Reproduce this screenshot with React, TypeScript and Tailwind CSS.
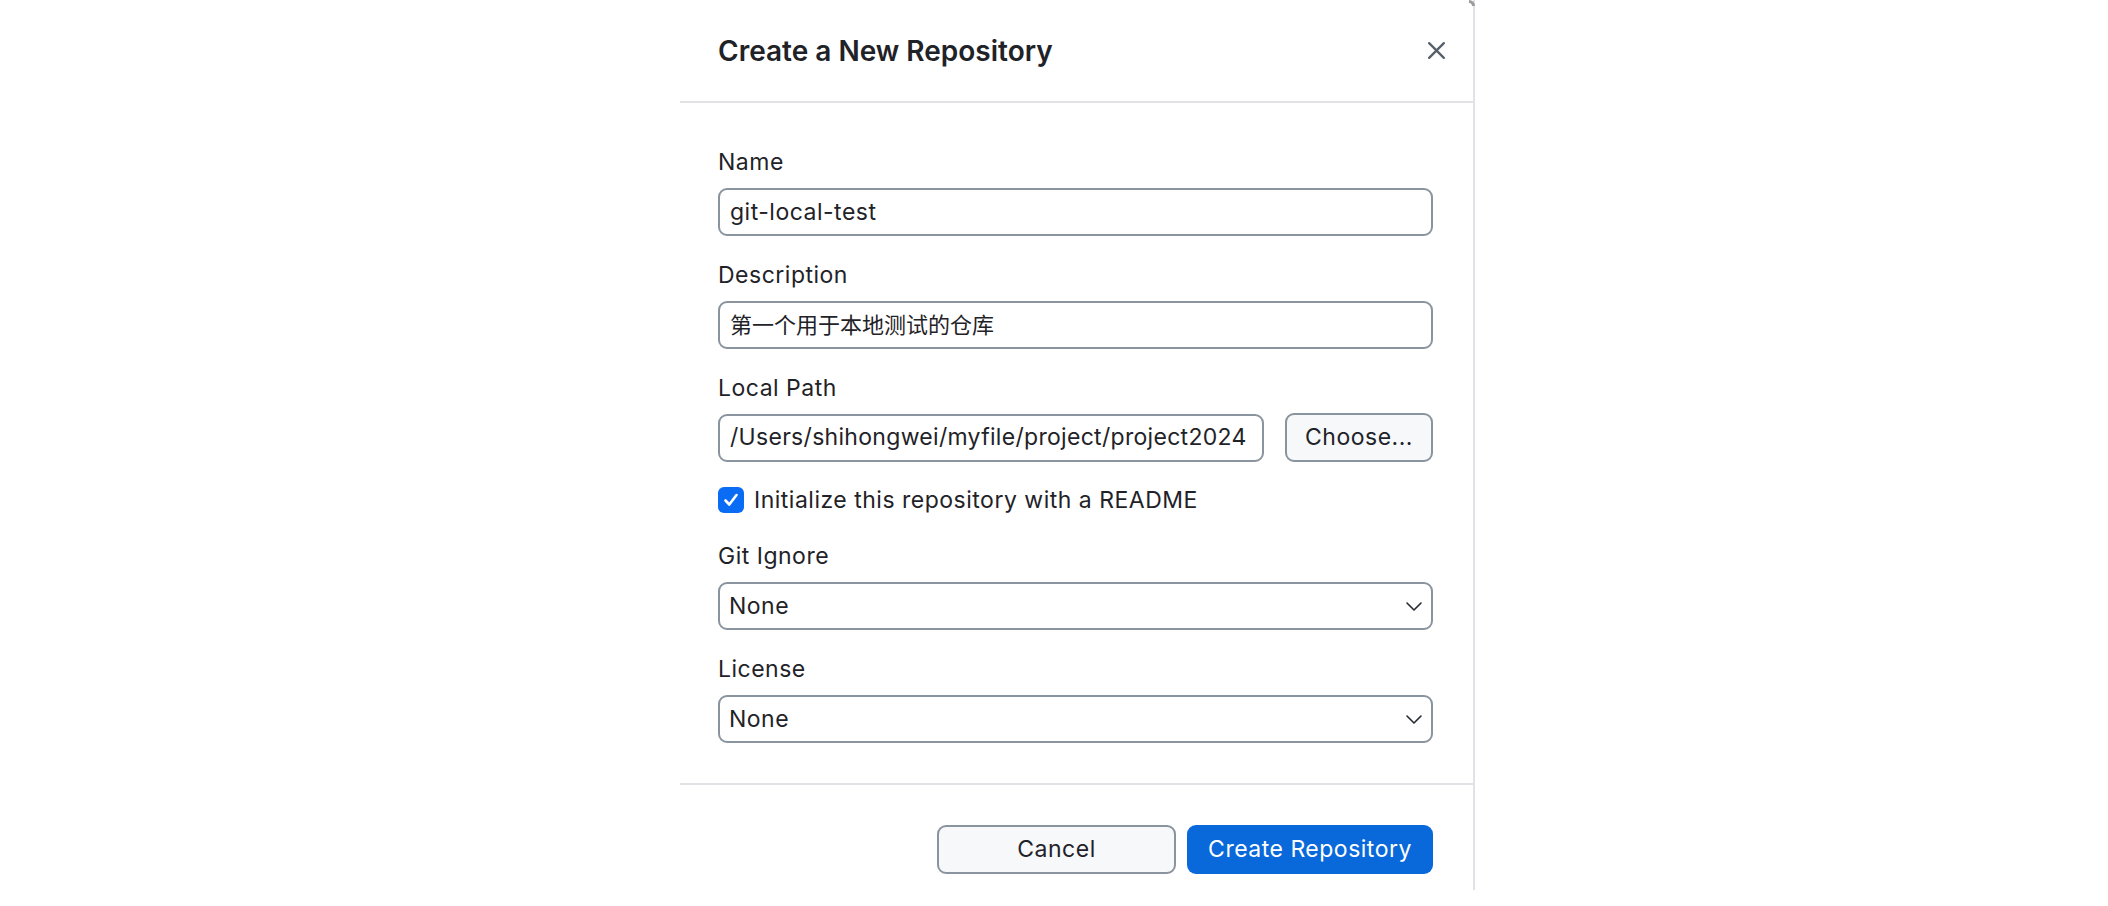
import React from "react";

const font = { fontFamily: "Inter, 'Noto Sans CJK SC', sans-serif" };

const Label: React.FC<{ children: React.ReactNode }> = ({ children }) => (
  <div className="h-[30px] text-[23px] leading-[30px] tracking-[0.5px] text-[#1f2328]">{children}</div>
);

const TextInput: React.FC<{ value: string; className?: string; textClass?: string }> = ({
  value,
  className = "",
  textClass = "text-[23px] tracking-[0.5px]",
}) => (
  <div
    className={`flex h-[48px] items-center overflow-hidden rounded-[9px] border-2 border-[#8a949e] bg-white px-[10px] text-[#1f2328] ${textClass} ${className}`}
  >
    <span className="whitespace-nowrap">{value}</span>
  </div>
);

const SelectBox: React.FC<{ value: string }> = ({ value }) => (
  <div className="flex h-[48px] items-center justify-between rounded-[9px] border-2 border-[#8a949e] bg-white pl-[9px] pr-[8px] text-[23px] tracking-[0.5px] text-[#1f2328]">
    <span>{value}</span>
    <svg width="18" height="18" viewBox="0 0 18 18" fill="none">
      <path d="M2 6l7 7 7-7" stroke="#24292f" strokeWidth="1.6" strokeLinecap="round" strokeLinejoin="round" />
    </svg>
  </div>
);

export default function App() {
  return (
    <div className="min-h-[906px] w-full bg-white" style={font}>
      <div className="relative ml-[680px] flex w-[795px] flex-col border-r-[2px] border-[#e1e1e6] bg-white">
        {/* window corner */}
        <div className="absolute right-[-2px] top-0 h-[6px] w-[6px] rounded-tr-[6px] border-r-[3px] border-t-[3px] border-[#9a9aa0]" />

        {/* header */}
        <div className="flex h-[101px] items-center justify-between pl-[38px] pr-[22px]">
          <h1 className="text-[28px] font-semibold text-[#1f2328]">Create a New Repository</h1>
          <button className="flex h-[30px] w-[30px] items-center justify-center">
            <svg width="21" height="21" viewBox="0 0 20 20" fill="none">
              <path d="M3 3l14 14M17 3L3 17" stroke="#57606a" strokeWidth="2.2" strokeLinecap="round" />
            </svg>
          </button>
        </div>
        <div className="h-[2px] bg-[#e1e1e6]" />

        {/* body */}
        <div className="flex flex-col pl-[38px] pr-[40px] pt-[44px] pb-[40px]">
          <Label>Name</Label>
          <TextInput value="git-local-test" className="mt-[11px]" />

          <div className="mt-[24px]">
            <Label>Description</Label>
          </div>
          <TextInput value="第一个用于本地测试的仓库" className="mt-[11px]" textClass="text-[22px]" />

          <div className="mt-[24px]">
            <Label>Local Path</Label>
          </div>
          <div className="mt-[10px] flex items-center justify-between">
            <TextInput
              value="/Users/shihongwei/myfile/project/project2024"
              className="w-[546px] shrink-0"
              textClass="text-[23px] tracking-[0.3px]"
            />
            <button className="h-[49px] w-[148px] shrink-0 rounded-[9px] border-2 border-[#8a949e] bg-[#f6f8fa] text-[23px] tracking-[0.5px] text-[#1f2328]">
              Choose...
            </button>
          </div>

          <label className="mt-[23px] flex h-[30px] items-center gap-[10px]">
            <span className="flex h-[26px] w-[26px] items-center justify-center rounded-[6px] bg-[#0a6cf5]">
              <svg width="18" height="18" viewBox="0 0 18 18" fill="none">
                <path d="M3.5 9.5l3.8 4L14.5 4" stroke="#fff" strokeWidth="2.6" strokeLinecap="round" strokeLinejoin="round" />
              </svg>
            </span>
            <span className="text-[23px] tracking-[0.5px] text-[#1f2328]">Initialize this repository with a README</span>
          </label>

          <div className="mt-[26px]">
            <Label>Git Ignore</Label>
          </div>
          <div className="mt-[11px]">
            <SelectBox value="None" />
          </div>

          <div className="mt-[24px]">
            <Label>License</Label>
          </div>
          <div className="mt-[11px]">
            <SelectBox value="None" />
          </div>
        </div>
        <div className="h-[2px] bg-[#e1e1e6]" />

        {/* footer */}
        <div className="flex justify-end gap-[11px] pl-[38px] pr-[40px] pt-[40px] pb-[16px]">
          <button className="h-[49px] w-[239px] rounded-[9px] border-2 border-[#8a949e] bg-[#f6f8fa] text-[23px] tracking-[0.5px] text-[#1f2328]">
            Cancel
          </button>
          <button className="h-[49px] w-[246px] rounded-[9px] bg-[#0969da] text-[23px] tracking-[0.5px] text-white">
            Create Repository
          </button>
        </div>
      </div>
    </div>
  );
}
